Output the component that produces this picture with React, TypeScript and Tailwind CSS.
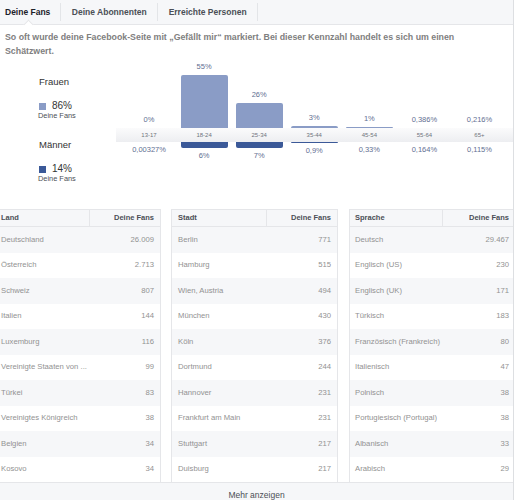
import React from 'react';

interface AgeGroup {
  label: string;
  female: string;
  femaleH: number;
  male: string;
  maleH: number;
}

const ageGroups: AgeGroup[] = [
  { label: '13-17', female: '0%', femaleH: 0, male: '0,00327%', maleH: 0 },
  { label: '18-24', female: '55%', femaleH: 53, male: '6%', maleH: 6 },
  { label: '25-34', female: '26%', femaleH: 25, male: '7%', maleH: 6 },
  { label: '35-44', female: '3%', femaleH: 2, male: '0,9%', maleH: 1 },
  { label: '45-54', female: '1%', femaleH: 1, male: '0,33%', maleH: 0 },
  { label: '55-64', female: '0,386%', femaleH: 0, male: '0,164%', maleH: 0 },
  { label: '65+', female: '0,216%', femaleH: 0, male: '0,115%', maleH: 0 },
];

type Row = [string, string];

const countries: Row[] = [
  ['Deutschland', '26.009'],
  ['Österreich', '2.713'],
  ['Schweiz', '807'],
  ['Italien', '144'],
  ['Luxemburg', '116'],
  ['Vereinigte Staaten von ...', '99'],
  ['Türkei', '83'],
  ['Vereinigtes Königreich', '38'],
  ['Belgien', '34'],
  ['Kosovo', '34'],
];

const cities: Row[] = [
  ['Berlin', '771'],
  ['Hamburg', '515'],
  ['Wien, Austria', '494'],
  ['München', '430'],
  ['Köln', '376'],
  ['Dortmund', '244'],
  ['Hannover', '231'],
  ['Frankfurt am Main', '231'],
  ['Stuttgart', '217'],
  ['Duisburg', '217'],
];

const languages: Row[] = [
  ['Deutsch', '29.467'],
  ['Englisch (US)', '230'],
  ['Englisch (UK)', '171'],
  ['Türkisch', '183'],
  ['Französisch (Frankreich)', '80'],
  ['Italienisch', '47'],
  ['Polnisch', '38'],
  ['Portugiesisch (Portugal)', '38'],
  ['Albanisch', '33'],
  ['Arabisch', '29'],
];

function Tabs() {
  const tabs = ['Deine Fans', 'Deine Abonnenten', 'Erreichte Personen'];
  return (
    <div className="flex h-[25px] items-center border-b border-[#e5e6e9] bg-[#f6f7f9] pl-[5px]">
      {tabs.map((t, i) => (
        <div key={t} className="flex h-full items-center">
          <div
            className={`relative flex h-full items-center text-[8.5px] font-bold ${
              i === 0 ? 'pr-[10px] text-[#1d2129]' : 'px-[10.5px] text-[#4b4f56]'
            }`}
          >
            {t}
            {i === 0 && (
              <span className="absolute bottom-[-4px] left-[20px] h-[7px] w-[7px] rotate-45 border-l border-t border-[#e5e6e9] bg-white" />
            )}
          </div>
          <span className="h-[18px] w-px bg-[#e3e5e8]" />
        </div>
      ))}
    </div>
  );
}

function LegendBlock({ title, value, color }: { title: string; value: string; color: string }) {
  return (
    <div>
      <div className="h-[12px] text-[9.5px] leading-[12px] text-[#333]">{title}</div>
      <div className="mt-[12px] flex h-[12px] items-center gap-[6px]">
        <span className={`h-[7px] w-[7px] ${color}`} />
        <span className="text-[10px] leading-[12px] text-[#333]">{value}</span>
      </div>
      <div className="ml-[-1px] h-[8px] text-[7.4px] leading-[8px] text-[#4b4f56]">Deine Fans</div>
    </div>
  );
}

function AgeChart() {
  return (
    <div className="flex h-[151px]">
      <div className="w-[116px] pl-[39px] pt-[18px]">
        <LegendBlock title="Frauen" value="86%" color="bg-[#8a9cc6]" />
        <div className="mt-[19px]">
          <LegendBlock title="Männer" value="14%" color="bg-[#3b5998]" />
        </div>
      </div>
      <div className="flex-1">
        {/* Frauen */}
        <div className="grid h-[70px] grid-cols-7 pl-[5.5px] pr-[6px]">
          {ageGroups.map((g) => (
            <div key={g.label} className="flex flex-col items-center justify-end">
              <span className="mb-[3px] text-[7.5px] leading-[10px] text-[#5f6f92]">{g.female}</span>
              <div
                className="w-[47px] rounded-t-[2px] bg-[#8a9cc6]"
                style={{ height: g.femaleH }}
              />
            </div>
          ))}
        </div>
        <div className="grid h-[14px] grid-cols-7 bg-gradient-to-b from-[#fbfbfc] to-[#edeef1] pl-[5.5px] pr-[6px]">
          {ageGroups.map((g) => (
            <div key={g.label} className="flex items-center justify-center text-[6px] text-[#6f747d]">
              {g.label}
            </div>
          ))}
        </div>
        {/* Männer */}
        <div className="grid grid-cols-7 pl-[5.5px] pr-[6px]">
          {ageGroups.map((g) => (
            <div key={g.label} className="flex flex-col items-center">
              <div
                className="w-[47px] rounded-b-[2px] bg-[#3b5998]"
                style={{ height: g.maleH }}
              />
              <span className="mt-[3px] text-[7.5px] leading-[10px] text-[#5f6f92]">{g.male}</span>
            </div>
          ))}
        </div>
      </div>
    </div>
  );
}

function StatTable({
  title,
  rows,
  className,
  padLeft,
  padRight,
}: {
  title: string;
  rows: Row[];
  className: string;
  padLeft: string;
  padRight: string;
}) {
  return (
    <div className={className}>
      <div className="flex h-[18px] border-y border-[#e5e6e9] bg-[#f6f7f9] text-[7.5px] font-bold text-[#4b4f56]">
        <div className={`flex flex-1 items-center border-r border-[#e5e6e9] ${padLeft}`}>{title}</div>
        <div className={`flex w-[70px] items-center justify-end ${padRight}`}>Deine Fans</div>
      </div>
      {rows.map(([name, value], i) => (
        <div
          key={name}
          className={`flex h-[25.5px] items-center justify-between text-[7.7px] text-[#929292] ${padLeft} ${padRight} ${
            i % 2 === 0 ? 'bg-[#f6f7f9]' : 'bg-white'
          }`}
        >
          <span>{name}</span>
          <span>{value}</span>
        </div>
      ))}
    </div>
  );
}

export default function App() {
  return (
    <div className="h-[500px] w-[514px] overflow-hidden border-r border-[#dddfe2] bg-white font-['Liberation_Sans',Arial,sans-serif]">
      <Tabs />
      <p className="w-[490px] px-[5px] pt-[5px] text-[8.8px] font-bold leading-[14px] text-[#808080]">
        So oft wurde deine Facebook-Seite mit „Gefällt mir“ markiert. Bei dieser Kennzahl handelt es sich um einen
        Schätzwert.
      </p>
      <AgeChart />
      <div className="flex">
        <StatTable
          title="Land"
          rows={countries}
          className="w-[161px] border-r border-[#e5e6e9]"
          padLeft="pl-[1px]"
          padRight="pr-[6px]"
        />
        <div className="w-[10px]" />
        <StatTable
          title="Stadt"
          rows={cities}
          className="w-[167px] border-x border-[#e5e6e9]"
          padLeft="pl-[6px]"
          padRight="pr-[6px]"
        />
        <div className="w-[11px]" />
        <StatTable
          title="Sprache"
          rows={languages}
          className="flex-1 border-l border-[#e5e6e9]"
          padLeft="pl-[5px]"
          padRight="pr-[4px]"
        />
      </div>
      <div className="flex h-[26px] items-center justify-center border-t border-[#e5e6e9] bg-[#f6f7f9] text-[8.5px] text-[#4b4f56]">
        Mehr anzeigen
      </div>
    </div>
  );
}
